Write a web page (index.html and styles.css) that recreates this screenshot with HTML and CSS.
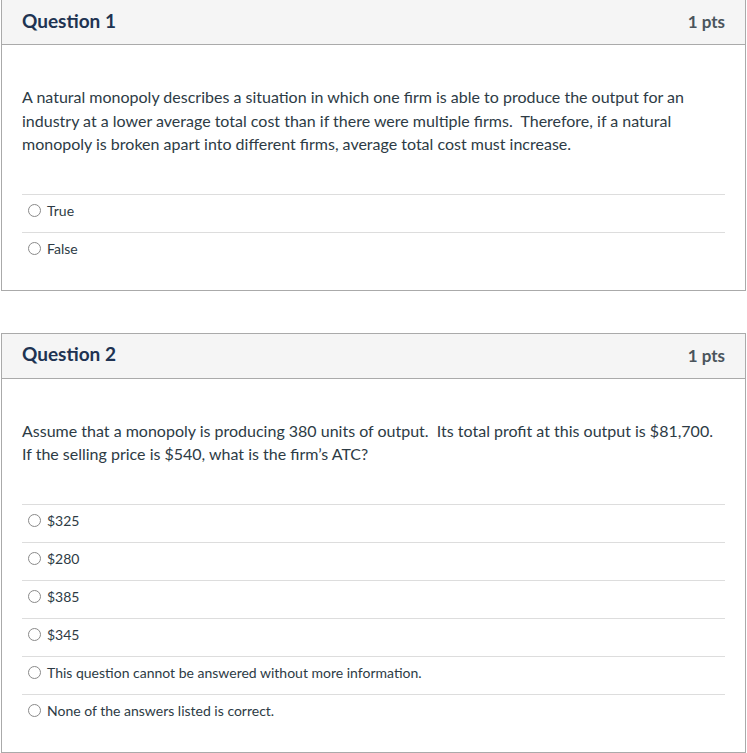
FILE: index.html
```html
<!DOCTYPE html>
<html>
<head>
<meta charset="utf-8">
<link rel="stylesheet" href="styles.css">
</head>
<body>
<div class="page">
  <div class="question q1">
    <div class="q-header">
      <span class="q-name">Question 1</span>
      <span class="q-pts">1 pts</span>
    </div>
    <div class="q-body">
      <p class="q-text">A natural monopoly describes a situation in which one firm is able to produce the output for an industry at a lower average total cost than if there were multiple firms.&nbsp; Therefore, if a natural monopoly is broken apart into different firms, average total cost must increase.</p>
      <div class="answers">
        <div class="answer"><span class="radio"></span><span class="label">True</span></div>
        <div class="answer"><span class="radio"></span><span class="label">False</span></div>
      </div>
    </div>
  </div>

  <div class="question q2">
    <div class="q-header">
      <span class="q-name">Question 2</span>
      <span class="q-pts">1 pts</span>
    </div>
    <div class="q-body">
      <p class="q-text">Assume that a monopoly is producing 380 units of output.&nbsp; Its total profit at this output is $81,700.&nbsp; If the selling price is $540, what is the firm’s ATC?</p>
      <div class="answers">
        <div class="answer"><span class="radio"></span><span class="label">$325</span></div>
        <div class="answer"><span class="radio"></span><span class="label">$280</span></div>
        <div class="answer"><span class="radio"></span><span class="label">$385</span></div>
        <div class="answer"><span class="radio"></span><span class="label">$345</span></div>
        <div class="answer"><span class="radio"></span><span class="label">This question cannot be answered without more information.</span></div>
        <div class="answer"><span class="radio"></span><span class="label">None of the answers listed is correct.</span></div>
      </div>
    </div>
  </div>
</div>
</body>
</html>
```
FILE: styles.css
```css
html, body {
  margin: 0;
  padding: 0;
  background: #ffffff;
}
body {
  font-family: Lato, "Open Sans", "Liberation Sans", sans-serif;
  color: #2d3b45;
}
.page {
  padding: 0 1px 0 1px;
  display: flex;
  flex-direction: column;
  gap: 42px;
}
.question {
  border: 1px solid #aaaaaa;
  background: #ffffff;
}
.q1 {
  margin-top: -1px;
}
.q-header {
  height: 40px;
  padding: 0 20px 4px 20px;
  background: #f5f5f5;
  border-bottom: 1px solid #aaaaaa;
  display: flex;
  align-items: center;
  justify-content: space-between;
}
.q-name {
  font-weight: 700;
  font-size: 19px;
  color: #203352;
}
.q-pts {
  font-weight: 700;
  font-size: 17px;
  color: #4a545c;
  margin-top: 3px;
}
.q-body {
  padding: 40px 20px 20px 20px;
}
.q-text {
  margin: 0;
  font-size: 16px;
  line-height: 23.5px;
  color: #2d3b45;
}
.answers {
  margin-top: 38px;
}
.answer {
  border-top: 1px solid #dddddd;
  height: 32px;
  padding: 0 0 5px 6px;
  display: flex;
  align-items: center;
}
.radio {
  width: 11px;
  height: 11px;
  border: 1px solid #8a8a8a;
  border-radius: 50%;
  margin-right: 6px;
  flex: none;
}
.label {
  font-size: 14px;
  color: #2d3b45;
}
```
